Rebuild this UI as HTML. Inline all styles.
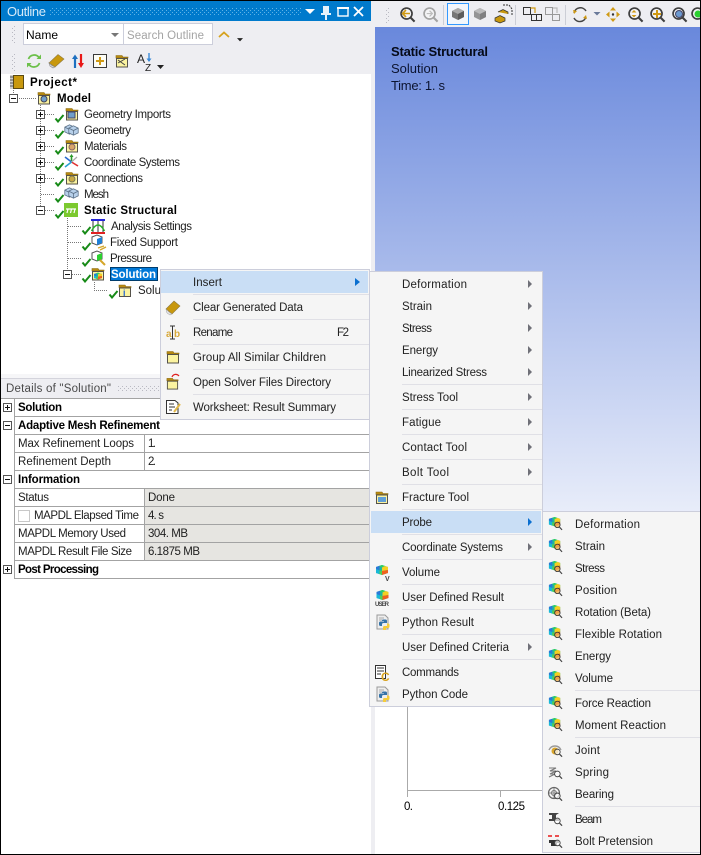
<!DOCTYPE html>
<html><head><meta charset="utf-8"><title>Outline</title>
<style>
html,body{margin:0;padding:0;background:#fff;width:701px;height:855px;overflow:hidden}
svg{display:block;position:absolute;left:0;top:0}
text{font-family:"Liberation Sans",sans-serif;font-size:11.5px;fill:#1e1e1e}
.b{font-weight:bold;fill:#000}
.m{fill:#222}
.k{fill:#000}
.v{font-size:13px;fill:#0c1430}
rect.c{shape-rendering:crispEdges}
</style></head><body>
<svg width="701" height="855" viewBox="0 0 701 855" xmlns="http://www.w3.org/2000/svg">
<defs>
<linearGradient id="bg" gradientUnits="userSpaceOnUse" x1="0" y1="27" x2="0" y2="600"><stop offset="0" stop-color="#6988DC"/><stop offset="1" stop-color="#ffffff"/></linearGradient>
<pattern id="gd" width="4" height="4" patternUnits="userSpaceOnUse"><rect width="1" height="1" fill="#b9b9c2"/><rect x="2" y="2" width="1" height="1" fill="#b9b9c2"/></pattern>
<pattern id="gb" width="4" height="4" patternUnits="userSpaceOnUse"><rect width="1" height="1" fill="#5fb3e6"/><rect x="2" y="2" width="1" height="1" fill="#5fb3e6"/></pattern>
<symbol id="ck" viewBox="0 0 10 9"><path d="M1 4.500L3.500 7.500L9 1" fill="none" stroke="#178a17" stroke-width="2"/></symbol>
<symbol id="fo" viewBox="0 0 14 14"><path d="M1 4V1.500H7L8 3H13V4Z" fill="#B98B10" stroke="#8a6a10" stroke-width=".6"/><rect x="1.500" y="4.500" width="11" height="8.500" fill="#FBF3A0" stroke="#55524a"/></symbol>
<symbol id="rb" viewBox="0 0 14 12"><path d="M1 3L7 1L13 3V9L7 11L1 9Z" fill="#1fb4a0"/><path d="M1 3L4.500 1.800V6.500L1 5Z" fill="#2a78d8"/><path d="M1 5L4.500 6.500V10L1 9Z" fill="#18b8d8"/><path d="M4.500 1.800L7 1L10 2L7 3.500Z" fill="#2fd060"/><path d="M7 3.500L10 2L13 3V6L7 7Z" fill="#f4d020"/><path d="M7 7L13 6V9L7 11Z" fill="#f0601c"/><path d="M4.500 6.500L7 7V11L4.500 10Z" fill="#50d050"/></symbol>
<symbol id="pr" viewBox="0 0 16 16"><use href="#rb" x="0" y="0" width="14" height="12"/><circle cx="10" cy="9.500" r="2.900" fill="#f0b050" fill-opacity=".8" stroke="#333" stroke-width=".9"/><path d="M12.200 11.800L15 14.800" stroke="#444" stroke-width="1.200"/></symbol>
<symbol id="mg" viewBox="0 0 16 16"><circle cx="10" cy="9.500" r="3" fill="#fff" fill-opacity=".7" stroke="#444" stroke-width="1"/><path d="M12.200 11.800L15 14.600" stroke="#444" stroke-width="1.300"/></symbol>
<symbol id="cube" viewBox="0 0 14 14"><path d="M1 4L7 1L13 4V10L7 13L1 10Z" fill="#b7d0ea" stroke="#5a6f86"/><path d="M1 4L7 7L13 4M7 7V13" fill="none" stroke="#5a6f86"/></symbol>
<symbol id="py" viewBox="0 0 14 16"><path d="M1 1H9L12 4V15H1Z" fill="#eee" stroke="#9a9a9a"/><path d="M3 4H8M3 6H6" stroke="#aaa"/><path d="M7 5.500h2.500a1.500 1.500 0 0 1 1.500 1.500v2H7.500a1.500 1.500 0 0 0-1.500 1.500V12H4.500a1.500 1.500 0 0 1-1.500-1.500V9a1.500 1.500 0 0 1 1.500-1.500H8V7H6V6.500a1 1 0 0 1 1-1z" fill="#3573a8"/><path d="M11 9.500h1.500a1.500 1.500 0 0 1 1 1.500v1.500a1.500 1.500 0 0 1-1.500 1.500H10V15.500a1 1 0 0 1-3 0V13.500a1.500 1.500 0 0 1 1.500-1.500H11Z" fill="#f5cc3a"/></symbol>
<symbol id="exm" viewBox="0 0 9 9"><rect x=".5" y=".5" width="8" height="8" fill="#fff" stroke="#555"/><path d="M2 4.500H7" stroke="#111"/></symbol>
<symbol id="exp" viewBox="0 0 9 9"><rect x=".5" y=".5" width="8" height="8" fill="#fff" stroke="#555"/><path d="M2 4.500H7M4.500 2V7" stroke="#111"/></symbol>
<symbol id="zm" viewBox="0 0 18 18"><circle cx="8" cy="8" r="5.800" fill="#f4f4f6" stroke="#3f3f3f" stroke-width="1.800"/><path d="M12.300 12.300L16.500 16.500" stroke="#3f3f3f" stroke-width="2.200"/></symbol>
<symbol id="zg" viewBox="0 0 18 18"><circle cx="8" cy="8" r="5.800" fill="#f4f4f6" stroke="#a3a3a3" stroke-width="1.800"/><path d="M12.300 12.300L16.500 16.500" stroke="#a3a3a3" stroke-width="2.200"/><path d="M5 8H11M8 5L11 8L8 11" fill="none" stroke="#bdbdbd" stroke-width="1.300"/></symbol>
<symbol id="gc" viewBox="0 0 14 14"><path d="M1 4L7 1L13 4V10L7 13L1 10Z" fill="#777"/><path d="M1 4L7 7L13 4L7 1Z" fill="#aaa"/><path d="M7 7V13L13 10V4Z" fill="#5c5c5c"/></symbol>
<symbol id="tri" viewBox="0 0 9 5"><path d="M0 0H9L4.500 5Z" fill="#222"/></symbol>
</defs>

<!-- frame backgrounds -->
<rect class="c" width="701" height="855" fill="#fff"/>
<rect class="c" x="1" y="1" width="370" height="20" fill="#007ACC"/>
<rect class="c" x="1" y="21" width="370" height="53" fill="#EEEEF2"/>
<rect class="c" x="371" y="1" width="4" height="853" fill="#EEEEF2"/>
<rect class="c" x="375" y="1" width="325" height="26" fill="#EEEEF2"/>
<rect class="c" x="375" y="27" width="325" height="680" fill="url(#bg)"/>

<!-- Viewport legend -->
<text x="391" y="56" textLength="97" style="font-size:13px;font-weight:bold;fill:#050a18">Static Structural</text>
<text x="391" y="73" class="v" textLength="47">Solution</text>
<text x="391" y="90" class="v" textLength="54">Time: 1. s</text>

<!-- Title bar -->
<text x="7" y="16" textLength="39" style="font-size:13px;fill:#d6eaf8">Outline</text>
<rect class="c" x="50" y="7" width="252" height="8" fill="url(#gb)"/>
<path d="M305 9H315L310 14Z" fill="#fff"/>
<path d="M323 6H329V13H331V15H327V20H325V15H321V13H323Z" fill="#e6f2fb"/>
<rect x="338" y="8" width="10" height="8" fill="none" stroke="#fff" stroke-width="1.400"/>
<rect class="c" x="337" y="7" width="12" height="2" fill="#fff"/>
<path d="M354 7L363 16M363 7L354 16" stroke="#fff" stroke-width="1.800"/>

<!-- Left toolbar -->
<rect class="c" x="12" y="26" width="4" height="17" fill="url(#gd)"/>
<rect class="c" x="12" y="53" width="4" height="18" fill="url(#gd)"/>
<rect class="c" x="23.500" y="23.500" width="100" height="21" fill="#fff" stroke="#CCCEDB"/>
<text x="26" y="39" textLength="32" class="k" style="font-size:12px">Name</text>
<path d="M111 33H119L115 37Z" fill="#777"/>
<rect class="c" x="123.500" y="23.500" width="89" height="21" fill="#fff" stroke="#CCCEDB"/>
<text x="127" y="39" textLength="77" style="fill:#a4a4a4">Search Outline</text>
<path d="M219 37L224 32.500L229 37" fill="none" stroke="#D6A21E" stroke-width="1.800"/>
<use href="#tri" x="237" y="38" width="6" height="3.500"/>

<!-- refresh -->
<path d="M28.500 59A6 6 0 0 1 39 57.500M39.500 63A6 6 0 0 1 29 64.500" fill="none" stroke="#6CC04A" stroke-width="1.800"/>
<path d="M36.500 59H41V54.500ZM31.500 63H27V67.500Z" fill="#6CC04A"/>
<!-- eraser -->
<path d="M49 63L58 54.500L64 59L55 67Z" fill="#C8980E" stroke="#8f7a40" stroke-width=".6"/>
<path d="M49 63L52 65.500L55 67L53 68L50 66Z" fill="#ddd" stroke="#888" stroke-width=".6"/>
<!-- sort -->
<path d="M75 56V68" stroke="#1e70c0" stroke-width="2.200"/><path d="M72 59L75 54.500L78 59Z" fill="#1e70c0"/>
<path d="M81 54V66" stroke="#e81818" stroke-width="2.200"/><path d="M78 63L81 68L84 63Z" fill="#e81818"/>
<!-- plus box -->
<rect class="c" x="93.500" y="54.500" width="13" height="13" fill="#fdfdf6" stroke="#3a3a3a"/>
<path d="M96 61H104M100 57V65" stroke="#D09A14" stroke-width="2"/>
<!-- link folder -->
<use href="#fo" x="115" y="54" width="14" height="14"/>
<path d="M118 63L125 59M118 60L125 65" stroke="#444" stroke-width="1"/>
<!-- A-Z -->
<text x="137" y="63" style="font-size:12px;fill:#222">A</text>
<text x="145" y="71" style="font-size:10px;fill:#222">Z</text>
<path d="M149 53V61" stroke="#3a8ad8" stroke-width="1.400"/><path d="M146.500 58.500L149 62L151.500 58.500Z" fill="#3a8ad8"/>
<use href="#tri" x="157" y="65" width="7" height="4"/>

<!-- Tree dotted connectors -->
<g fill="none" stroke="#777" stroke-dasharray="1 1">
<path d="M13.500 88V94M17 98.500H36"/>
<path d="M40.500 103V111M40.500 119V127M40.500 135V143M40.500 151V159M40.500 167V175M40.500 183V207"/>
<path d="M45 114.500H55M45 130.500H55M45 146.500H55M45 162.500H55M45 178.500H55M41 194.500H55M45 210.500H55"/>
<path d="M67.500 218V271M68 226.500H82M68 242.500H82M68 258.500H82M72 274.500H82"/>
<path d="M94.500 282V290.500H108"/>
</g>

<!-- Project -->
<rect class="c" x="13" y="75" width="11" height="14" fill="#C8980E"/>
<rect x="13.500" y="75.500" width="10" height="13" fill="none" stroke="#5a4a14"/>
<rect class="c" x="10" y="75" width="3" height="14" fill="#cfcfcf"/>
<path d="M10 77H13M10 80H13M10 83H13M10 86H13" stroke="#555"/>
<text x="30" y="86" class="b" textLength="47">Project*</text>

<use href="#exm" x="9" y="94" width="9" height="9"/>
<use href="#fo" x="37" y="91" width="14" height="14"/>
<circle cx="44" cy="99" r="3" fill="#6f9ecb" stroke="#445"/>
<text x="57" y="102" class="b" textLength="34">Model</text>

<!-- Expanders -->
<use href="#exp" x="36" y="110" width="9" height="9"/>
<use href="#exp" x="36" y="126" width="9" height="9"/>
<use href="#exp" x="36" y="142" width="9" height="9"/>
<use href="#exp" x="36" y="158" width="9" height="9"/>
<use href="#exp" x="36" y="174" width="9" height="9"/>
<use href="#exm" x="36" y="206" width="9" height="9"/>
<use href="#exm" x="63" y="270" width="9" height="9"/>

<!-- Checks -->
<use href="#ck" x="54.500" y="114" width="10" height="9"/>
<use href="#ck" x="54.500" y="130" width="10" height="9"/>
<use href="#ck" x="54.500" y="146" width="10" height="9"/>
<use href="#ck" x="54.500" y="162" width="10" height="9"/>
<use href="#ck" x="54.500" y="178" width="10" height="9"/>
<use href="#ck" x="54.500" y="194" width="10" height="9"/>
<use href="#ck" x="54.500" y="210" width="10" height="9"/>
<use href="#ck" x="81.500" y="226" width="10" height="9"/>
<use href="#ck" x="81.500" y="242" width="10" height="9"/>
<use href="#ck" x="81.500" y="258" width="10" height="9"/>
<use href="#ck" x="81.500" y="274" width="10" height="9"/>
<use href="#ck" x="108.500" y="290" width="10" height="9"/>

<!-- Tree icons -->
<use href="#fo" x="65" y="107" width="14" height="14"/><rect x="68" y="112" width="7" height="6" fill="#6f9ecb" stroke="#446"/>
<use href="#cube" x="64" y="124" width="11" height="11"/><use href="#cube" x="68" y="125" width="11" height="11"/>
<use href="#fo" x="65" y="139" width="14" height="14"/><circle cx="72" cy="147" r="3" fill="#d9a66b" stroke="#866"/>
<path d="M71.500 162V156" stroke="#2a9a2a" stroke-width="1.600"/><path d="M71.500 162L65 157" stroke="#2a6ad0" stroke-width="1.600"/><path d="M71.500 162L78 166" stroke="#e03030" stroke-width="1.600"/><path d="M71.500 162L65 167" stroke="#2aa0d0" stroke-width="1.600"/><path d="M71.500 162L77 157" stroke="#aaa" stroke-width="1.200"/><path d="M71.500 154L69.500 157H73.500Z" fill="#2a9a2a"/>
<use href="#fo" x="65" y="171" width="14" height="14"/><circle cx="72" cy="179" r="3" fill="#c9a844" stroke="#775"/>
<use href="#cube" x="64" y="187" width="11" height="11"/><use href="#cube" x="68" y="188" width="11" height="11"/>
<rect class="c" x="64" y="203" width="14" height="14" fill="#7CC92F"/>
<path d="M66 209H76M68 209L67 213M71.500 209L70.500 213M75 209L74 213" stroke="#fff" stroke-width="1.200" fill="none"/>
<rect class="c" x="91" y="219" width="14" height="2" fill="#2424d8"/><rect class="c" x="91" y="232" width="14" height="2" fill="#e02020"/>
<path d="M93 221V232M103 221V232M98 221V232" stroke="#333"/><path d="M91.500 231Q98 219 104.500 231" fill="none" stroke="#27b02a" stroke-width="1.400"/>
<path d="M92 237L97 235L102 237V243L97 245L92 243Z" fill="#fff" stroke="#555"/><path d="M97 239L102 237V243L97 245Z" fill="#1e80d8"/><path d="M98 248L104 246M100 250L106 247" stroke="#d5a62a" stroke-width="1.400"/>
<path d="M92 253L97 251L102 253V259L97 261L92 259Z" fill="#fff" stroke="#555"/><path d="M97 255L102 253V259L97 261Z" fill="#2bd030"/><path d="M100 260L105 265" stroke="#d5a62a" stroke-width="2"/>
<use href="#fo" x="91" y="267" width="14" height="14"/><use href="#rb" x="93" y="272" width="10" height="8"/>
<use href="#fo" x="118" y="283" width="14" height="15"/><text x="123" y="296" style="font-size:9px;font-weight:bold;fill:#2a6ad0">i</text>

<!-- Tree text -->
<text x="84" y="118" textLength="87">Geometry Imports</text>
<text x="84" y="134" textLength="47">Geometry</text>
<text x="84" y="150" textLength="43">Materials</text>
<text x="84" y="166" textLength="96">Coordinate Systems</text>
<text x="84" y="182" textLength="59">Connections</text>
<text x="84" y="198" textLength="25">Mesh</text>
<text x="84" y="214" class="b" textLength="93">Static Structural</text>
<text x="111" y="230" textLength="81">Analysis Settings</text>
<text x="110" y="246" textLength="68">Fixed Support</text>
<text x="110" y="262" textLength="42">Pressure</text>
<rect class="c" x="110" y="267" width="48" height="14" fill="#0078D7"/>
<rect x="110.500" y="267.500" width="47" height="13" fill="none" stroke="#000" stroke-dasharray="1 1"/>
<text x="111" y="278" class="b" textLength="45" style="fill:#fff">Solution</text>
<text x="138" y="294" textLength="102">Solution Information</text>

<!-- Details -->
<rect class="c" x="1" y="374" width="370" height="24" fill="#EEEEF2"/>
<rect class="c" x="1" y="374" width="370" height="4" fill="#f6f6f8"/>
<rect class="c" x="1" y="378" width="370" height="1" fill="#d4d4dc"/>
<text x="6" y="392" textLength="105" style="fill:#4a4a4a">Details of "Solution"</text>
<rect class="c" x="117" y="385" width="44" height="6" fill="url(#gd)"/>
<rect class="c" x="145" y="489" width="224" height="71" fill="#E6E5E1"/>
<g fill="#a3a3a3">
<rect class="c" x="1" y="398" width="368" height="1"/>
<rect class="c" x="15" y="416" width="354" height="1"/>
<rect class="c" x="15" y="434" width="354" height="1"/>
<rect class="c" x="15" y="452" width="354" height="1"/>
<rect class="c" x="15" y="470" width="354" height="1"/>
<rect class="c" x="15" y="488" width="354" height="1"/>
<rect class="c" x="15" y="506" width="354" height="1"/>
<rect class="c" x="15" y="524" width="354" height="1"/>
<rect class="c" x="15" y="542" width="354" height="1"/>
<rect class="c" x="15" y="560" width="354" height="1"/>
<rect class="c" x="15" y="578" width="354" height="1"/>
<rect class="c" x="14" y="398" width="1" height="181"/>
<rect class="c" x="144" y="434" width="1" height="36"/>
<rect class="c" x="144" y="488" width="1" height="72"/>
</g>
<use href="#exp" x="3" y="403" width="9" height="9"/>
<use href="#exm" x="3" y="421" width="9" height="9"/>
<use href="#exm" x="3" y="475" width="9" height="9"/>
<use href="#exp" x="3" y="565" width="9" height="9"/>
<text x="18" y="411" class="b" textLength="44">Solution</text>
<text x="18" y="429" class="b" textLength="142">Adaptive Mesh Refinement</text>
<text x="18" y="447" textLength="116">Max Refinement Loops</text>
<text x="18" y="465" textLength="93">Refinement Depth</text>
<text x="18" y="483" class="b" textLength="62">Information</text>
<text x="18" y="501" textLength="31">Status</text>
<rect class="c" x="18.500" y="510.500" width="11" height="11" fill="#fff" stroke="#c8c8c8"/>
<text x="34" y="519" textLength="105">MAPDL Elapsed Time</text>
<text x="18" y="537" textLength="108">MAPDL Memory Used</text>
<text x="18" y="555" textLength="114">MAPDL Result File Size</text>
<text x="18" y="573" class="b" textLength="81">Post Processing</text>
<text x="148" y="447" textLength="8">1.</text>
<text x="148" y="465" textLength="8">2.</text>
<text x="148" y="501" textLength="27">Done</text>
<text x="148" y="519" textLength="16">4. s</text>
<text x="148" y="537" textLength="40">304. MB</text>
<text x="148" y="555" textLength="52">6.1875 MB</text>

<!-- Right toolbar -->
<rect class="c" x="385" y="7" width="4" height="17" fill="url(#gd)"/>
<use href="#zm" x="399" y="6" width="17" height="17"/><path d="M402.500 13.500H410M406 10L402.500 13.500L406 17" fill="none" stroke="#D09A14" stroke-width="1.600"/>
<use href="#zg" x="422" y="6" width="17" height="17"/>
<rect class="c" x="443" y="5" width="1" height="20" fill="#ccced6"/>
<rect class="c" x="447.500" y="3.500" width="21" height="21" fill="#f3f6fb" stroke="#3399FF"/>
<use href="#gc" x="451" y="7" width="14" height="14"/>
<use href="#gc" x="473" y="7" width="14" height="14" opacity=".75"/>
<path d="M498 12L503 9.500L508 12V14M495 18L500 15.500L505 18V21L500 23L495 21Z" fill="#C8980E" stroke="#333" stroke-width=".7"/>
<path d="M503 5H509L512 9V15" fill="none" stroke="#333" stroke-dasharray="2 1"/>
<rect class="c" x="515" y="5" width="1" height="20" fill="#ccced6"/>
<rect x="523.500" y="7.500" width="7" height="7" fill="none" stroke="#333"/><path d="M530.500 8H535V13" fill="none" stroke="#D09A14" stroke-width="1.200"/>
<rect x="531.500" y="14.500" width="10" height="6" fill="none" stroke="#333"/><path d="M536.500 14.500V20.500" stroke="#333"/>
<rect x="545.500" y="7.500" width="7" height="7" fill="none" stroke="#999"/><path d="M553 8H557V13" fill="none" stroke="#bbb" stroke-width="1.200"/><rect x="552.500" y="14.500" width="7" height="6" fill="none" stroke="#999"/>
<rect class="c" x="565" y="5" width="1" height="20" fill="#ccced6"/>
<path d="M574 13A6.500 6.500 0 0 1 586 11M586 17A6.500 6.500 0 0 1 574 18" fill="none" stroke="#444" stroke-width="1.500"/>
<path d="M573 10L577 11L574 14ZM587 19L583 18L586 15Z" fill="#D09A14"/>
<path d="M593.500 12H600.500L597 15.500Z" fill="#6a7a9a"/>
<path d="M613 7L616 10.500H610ZM613 22L616 18.500H610ZM606 14.500L609.500 11.500V17.500ZM620 14.500L616.500 11.500V17.500Z" fill="#D09A14"/>
<circle cx="613" cy="14.500" r="1.200" fill="#333"/>
<use href="#zm" x="627" y="6" width="17" height="17"/><path d="M634 10L631.500 12.500H636.500ZM634 17.500L631.500 15H636.500Z" fill="#D09A14"/>
<use href="#zm" x="649" y="6" width="17" height="17"/><path d="M653 14H661M657 10V18" stroke="#D09A14" stroke-width="2"/>
<use href="#zm" x="671" y="6" width="17" height="17"/><circle cx="679" cy="14" r="3.500" fill="#6c9ad0" stroke="#446"/>
<use href="#zm" x="690" y="6" width="17" height="17"/><circle cx="698" cy="14" r="3.500" fill="#2bd030"/>

<!-- Chart -->
<rect class="c" x="407" y="700" width="1" height="97" fill="#aaa"/>
<rect class="c" x="407" y="790" width="140" height="1" fill="#aaa"/>
<rect class="c" x="500" y="790" width="1" height="7" fill="#aaa"/>
<text x="404" y="810" class="k" textLength="9">0.</text>
<text x="498" y="810" class="k" textLength="27">0.125</text>

<!-- Context menu 1 -->
<rect class="c" x="160.500" y="269.500" width="209" height="150" fill="#F5F5F5" stroke="#CCCEDB"/>
<rect class="c" x="161" y="271" width="207" height="22" fill="#C9DEF5"/>
<g fill="#E0E0E6">
<rect class="c" x="193" y="294" width="176" height="1"/>
<rect class="c" x="193" y="319" width="176" height="1"/>
<rect class="c" x="193" y="344" width="176" height="1"/>
<rect class="c" x="193" y="369" width="176" height="1"/>
<rect class="c" x="193" y="394" width="176" height="1"/>
</g>
<text x="193" y="286" class="m" textLength="29">Insert</text>
<path d="M355 278L360 282L355 286Z" fill="#0A6FD0"/>
<text x="193" y="311" class="m" textLength="110">Clear Generated Data</text>
<text x="193" y="336" class="m" textLength="40">Rename</text>
<text x="337" y="336" class="m" textLength="12">F2</text>
<text x="193" y="361" class="m" textLength="133">Group All Similar Children</text>
<text x="193" y="386" class="m" textLength="138">Open Solver Files Directory</text>
<text x="193" y="411" class="m" textLength="143">Worksheet: Result Summary</text>
<path d="M166 309L174 301L180 306L172 314Z" fill="#C8980E" stroke="#8f7a40" stroke-width=".6"/>
<path d="M166 309L169 312L172 314L170 315L167 313Z" fill="#e4e4e4" stroke="#999" stroke-width=".5"/>
<text x="166" y="337" style="font-size:10px;font-weight:bold;fill:#D8A93A">a</text>
<text x="174" y="337" style="font-size:10px;font-weight:bold;fill:#D8A93A">b</text>
<path d="M170 326H175M172.500 326V339M170 339H175" stroke="#333" fill="none"/>
<use href="#fo" x="166" y="350" width="14" height="14"/>
<use href="#fo" x="166" y="377" width="13" height="13"/><path d="M172 377A4 4 0 0 1 179 376" fill="none" stroke="#e02020" stroke-width="1.200"/>
<path d="M166.500 400.500H175L178 403V413.500H166.500Z" fill="#fff" stroke="#333"/><path d="M169 404H174M169 407H175M169 410H172" stroke="#333"/><path d="M174 412L180 404" stroke="#E2B84A" stroke-width="2"/>

<!-- Context menu 2 -->
<rect class="c" x="369.500" y="271.500" width="173" height="435" fill="#F5F5F5" stroke="#CCCEDB"/>
<rect class="c" x="371" y="511" width="170" height="22" fill="#C9DEF5"/>
<g fill="#E0E0E6">
<rect class="c" x="402" y="384" width="140" height="1"/>
<rect class="c" x="402" y="409" width="140" height="1"/>
<rect class="c" x="402" y="434" width="140" height="1"/>
<rect class="c" x="402" y="459" width="140" height="1"/>
<rect class="c" x="402" y="484" width="140" height="1"/>
<rect class="c" x="402" y="509" width="140" height="1"/>
<rect class="c" x="402" y="534" width="140" height="1"/>
<rect class="c" x="402" y="559" width="140" height="1"/>
<rect class="c" x="402" y="584" width="140" height="1"/>
<rect class="c" x="402" y="609" width="140" height="1"/>
<rect class="c" x="402" y="634" width="140" height="1"/>
<rect class="c" x="402" y="659" width="140" height="1"/>
</g>
<text x="402" y="288" class="m" textLength="65">Deformation</text>
<text x="402" y="310" class="m" textLength="30">Strain</text>
<text x="402" y="332" class="m" textLength="30">Stress</text>
<text x="402" y="354" class="m" textLength="36">Energy</text>
<text x="402" y="376" class="m" textLength="85">Linearized Stress</text>
<text x="402" y="401" class="m" textLength="56">Stress Tool</text>
<text x="402" y="426" class="m" textLength="39">Fatigue</text>
<text x="402" y="451" class="m" textLength="65">Contact Tool</text>
<text x="402" y="476" class="m" textLength="47">Bolt Tool</text>
<text x="402" y="501" class="m" textLength="67">Fracture Tool</text>
<text x="402" y="526" class="m" textLength="30">Probe</text>
<text x="402" y="551" class="m" textLength="101">Coordinate Systems</text>
<text x="402" y="576" class="m" textLength="38">Volume</text>
<text x="402" y="601" class="m" textLength="102">User Defined Result</text>
<text x="402" y="626" class="m" textLength="72">Python Result</text>
<text x="402" y="651" class="m" textLength="107">User Defined Criteria</text>
<text x="402" y="676" class="m" textLength="57">Commands</text>
<text x="402" y="698" class="m" textLength="66">Python Code</text>
<g fill="#6f7078">
<path d="M528 280L532 284L528 288Z"/>
<path d="M528 302L532 306L528 310Z"/>
<path d="M528 324L532 328L528 332Z"/>
<path d="M528 346L532 350L528 354Z"/>
<path d="M528 368L532 372L528 376Z"/>
<path d="M528 393L532 397L528 401Z"/>
<path d="M528 418L532 422L528 426Z"/>
<path d="M528 443L532 447L528 451Z"/>
<path d="M528 468L532 472L528 476Z"/>
<path d="M528 543L532 547L528 551Z"/>
<path d="M528 643L532 647L528 651Z"/>
</g>
<path d="M528 518L532 522L528 526Z" fill="#0A6FD0"/>
<use href="#fo" x="375" y="490" width="14" height="15"/><rect x="378" y="497" width="8" height="5" fill="#5f9fd8"/>
<use href="#rb" x="375" y="564" width="14" height="12"/><text x="385" y="581" style="font-size:7px;font-weight:bold;fill:#444">V</text>
<use href="#rb" x="375" y="589" width="15" height="12"/><text x="375" y="606" textLength="14" style="font-size:6px;font-weight:bold;fill:#444">USER</text>
<use href="#py" x="376" y="614" width="14" height="16"/>
<rect x="375.500" y="665.500" width="10" height="13" fill="#fff" stroke="#333"/><path d="M377 668H384M377 671H384M377 674H381" stroke="#333"/>
<text x="381" y="681" style="font-size:12px;font-weight:bold;fill:#D8A21E">C</text>
<use href="#py" x="376" y="686" width="14" height="16"/>

<!-- Context menu 3 -->
<rect class="c" x="542.500" y="511.500" width="158" height="341" fill="#F5F5F5" stroke="#CCCEDB"/>
<g fill="#E0E0E6">
<rect class="c" x="575" y="690" width="125" height="1"/>
<rect class="c" x="575" y="737" width="125" height="1"/>
<rect class="c" x="575" y="806" width="125" height="1"/>
</g>
<text x="575" y="528" class="m" textLength="65">Deformation</text>
<text x="575" y="550" class="m" textLength="30">Strain</text>
<text x="575" y="572" class="m" textLength="30">Stress</text>
<text x="575" y="594" class="m" textLength="42">Position</text>
<text x="575" y="616" class="m" textLength="76">Rotation (Beta)</text>
<text x="575" y="638" class="m" textLength="87">Flexible Rotation</text>
<text x="575" y="660" class="m" textLength="36">Energy</text>
<text x="575" y="682" class="m" textLength="38">Volume</text>
<text x="575" y="707" class="m" textLength="76">Force Reaction</text>
<text x="575" y="729" class="m" textLength="91">Moment Reaction</text>
<text x="575" y="754" class="m" textLength="25">Joint</text>
<text x="575" y="776" class="m" textLength="34">Spring</text>
<text x="575" y="798" class="m" textLength="39">Bearing</text>
<text x="575" y="823" class="m" textLength="27">Beam</text>
<text x="575" y="845" class="m" textLength="78">Bolt Pretension</text>
<use href="#pr" x="548" y="516" width="15" height="15"/>
<use href="#pr" x="548" y="538" width="15" height="15"/>
<use href="#pr" x="548" y="560" width="15" height="15"/>
<use href="#pr" x="548" y="582" width="15" height="15"/>
<use href="#pr" x="548" y="604" width="15" height="15"/>
<use href="#pr" x="548" y="626" width="15" height="15"/>
<use href="#pr" x="548" y="648" width="15" height="15"/>
<use href="#pr" x="548" y="670" width="15" height="15"/>
<use href="#pr" x="548" y="695" width="15" height="15"/>
<use href="#pr" x="548" y="717" width="15" height="15"/>
<path d="M549 750A6.500 6.500 0 0 1 561 750" fill="none" stroke="#999" stroke-width="1.400"/><circle cx="555" cy="751" r="3.500" fill="#D9A52A"/><use href="#mg" x="548" y="743" width="15" height="15"/>
<path d="M549 768H556L550 771H556L550 774H555L549 777" fill="none" stroke="#777" stroke-width="1.100"/><use href="#mg" x="548" y="765" width="15" height="15"/>
<circle cx="554" cy="793" r="5.500" fill="none" stroke="#666" stroke-width="1.200"/><circle cx="554" cy="793" r="2.500" fill="none" stroke="#666"/><path d="M554 788V798M549 793H559" stroke="#888"/><use href="#mg" x="548" y="787" width="15" height="15"/>
<path d="M549 813H559L556 815V819H559V821H549V819H552V815L549 815Z" fill="#444"/><use href="#mg" x="548" y="812" width="15" height="15"/>
<path d="M548 836H552M555 836H559" stroke="#e81818" stroke-width="1.400"/>
<path d="M549 840H559V843H557V846H551V843H549Z" fill="#333"/><use href="#mg" x="548" y="834" width="15" height="15"/>

<!-- Outer border -->
<rect class="c" x="0" y="0" width="701" height="1" fill="#000"/>
<rect class="c" x="0" y="854" width="701" height="1" fill="#000"/>
<rect class="c" x="0" y="0" width="1" height="855" fill="#000"/>
<rect class="c" x="700" y="0" width="1" height="855" fill="#000"/>
</svg>
</body></html>
